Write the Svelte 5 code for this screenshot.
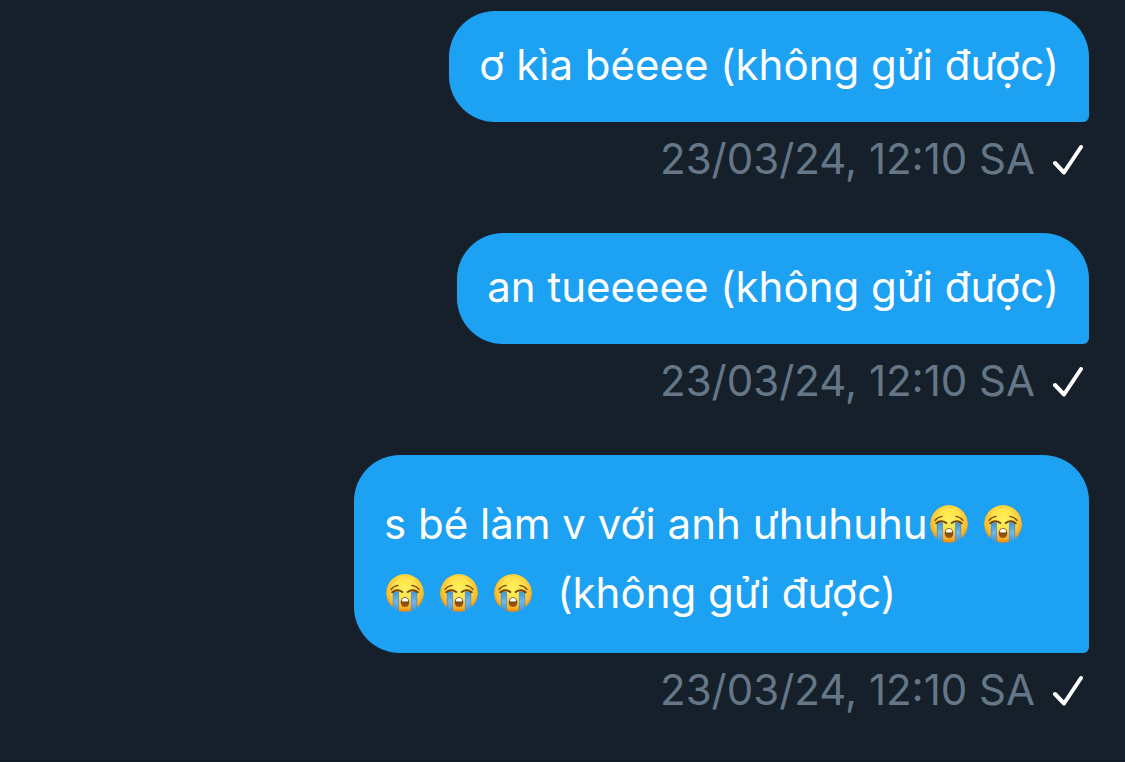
<script>
	const suffix = '(không gửi được)';

	const messages = [
		{ text: 'ơ kìa béeee', sobs: 0, time: '23/03/24, 12:10 SA' },
		{ text: 'an tueeeee', sobs: 0, time: '23/03/24, 12:10 SA' },
		{ text: 's bé làm v với anh ưhuhuhu', sobs: 5, time: '23/03/24, 12:10 SA' }
	];
</script>

<svg class="defs" aria-hidden="true">
	<defs>
		<radialGradient id="face" cx="50%" cy="38%" r="63%">
			<stop offset="0" stop-color="#fff25e" />
			<stop offset="0.45" stop-color="#ffe24a" />
			<stop offset="0.78" stop-color="#fdb728" />
			<stop offset="1" stop-color="#e8800c" />
		</radialGradient>
		<linearGradient id="tear" x1="0" y1="0" x2="0" y2="1">
			<stop offset="0" stop-color="#4493d2" />
			<stop offset="0.5" stop-color="#70b8ea" />
			<stop offset="1" stop-color="#3b8fd8" />
		</linearGradient>
		<linearGradient id="mouth" x1="0" y1="0" x2="0" y2="1">
			<stop offset="0" stop-color="#5d3205" />
			<stop offset="1" stop-color="#a45c15" />
		</linearGradient>
		<clipPath id="round"><circle cx="19" cy="19" r="19" /></clipPath>
	</defs>
</svg>

<main class="thread">
	{#each messages as message}
		<article class="message">
			<p class="bubble">
				{message.text}{#each { length: message.sobs } as _}<svg class="emoji" viewBox="0 0 38 38" role="img" aria-label="😭">
					<g clip-path="url(#round)">
						<circle cx="19" cy="19" r="19" fill="url(#face)" />
						<path d="M7 17.5h5.7V38H7zM25.3 17.5H31V38h-5.7z" fill="url(#tear)" />
						<path d="M7.2 18v18M12.6 18v20M25.4 18v20M30.8 18v18" stroke="#3789cb" stroke-width="0.6" />
					</g>
					<path
						d="M5 15.5Q7.5 12 12.2 11.4M33 15.5Q30.5 12 25.8 11.4"
						fill="none"
						stroke="#80500c"
						stroke-width="1.4"
						stroke-linecap="round"
					/>
					<path
						d="M6.2 18.2Q11 14.6 16.3 18M21.7 18Q27 14.6 31.8 18.2"
						fill="none"
						stroke="#744407"
						stroke-width="2"
						stroke-linecap="round"
					/>
					<path
						d="M19 23.2c2.7 0 4.3 2 4.3 5 0 3.2-1.7 4.9-4.3 4.9s-4.3-1.7-4.3-4.9c0-3 1.6-5 4.3-5z"
						fill="url(#mouth)"
					/>
					<path d="M15.8 25.7q1.2-2 3.2-2t3.2 2q.3 1.8-.8 1.8h-4.8q-1.1 0-.8-1.8z" fill="#fff" />
				</svg>{' '}{/each}{#if message.sobs}&nbsp;{:else}{' '}{/if}{suffix}
			</p>
			<footer class="meta">
				<time datetime="2024-03-23T00:10">{message.time}</time>
				<svg class="check" viewBox="0 0 32 32" role="img" aria-label="✓">
					<path d="M3 20L12 29.5L29 4" />
				</svg>
			</footer>
		</article>
	{/each}
</main>

<style>
	:global(body) {
		background: #16202b;
	}
	.defs {
		position: absolute;
		width: 0;
		height: 0;
	}
	.thread {
		display: flex;
		flex-direction: column;
		gap: 49px;
		padding: 11px 36px 45px 39px;
		border-bottom: 1px solid #15152a;
		font-family: Inter, 'Noto Sans', sans-serif;
		font-size: 42px;
		line-height: 51px;
	}
	.message {
		display: flex;
		flex-direction: column;
		align-items: flex-end;
		gap: 11px;
	}
	.bubble {
		box-sizing: border-box;
		max-width: 70%;
		margin: 0;
		padding: 28px 30px 32px;
		border-radius: 46px 46px 6px 46px;
		background: #1da1f2;
		color: #fff;
	}
	.emoji {
		width: 38px;
		height: 38px;
		margin: 22px 2px 9px;
		vertical-align: -13px;
	}
	.meta {
		display: flex;
		align-items: center;
		gap: 17px;
		padding-right: 5px;
		color: #657786;
	}
	.check {
		width: 32px;
		height: 32px;
		fill: none;
		stroke: #fff;
		stroke-width: 4;
		stroke-linecap: round;
		stroke-linejoin: round;
	}
</style>
